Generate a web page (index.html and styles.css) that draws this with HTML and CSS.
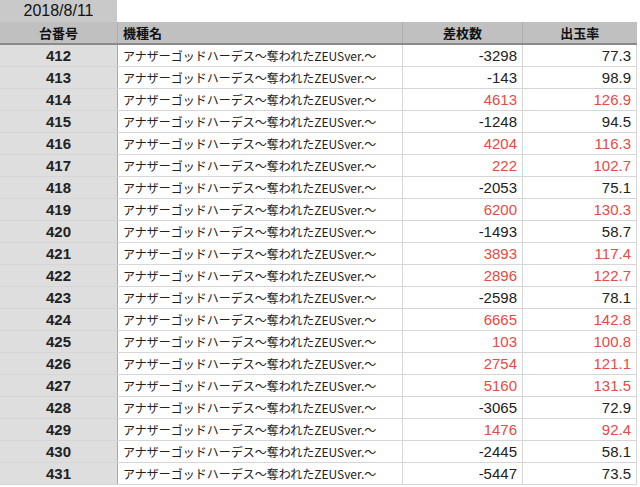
FILE: index.html
```html
<!DOCTYPE html>
<html lang="ja">
<head>
<meta charset="utf-8">
<link rel="stylesheet" href="styles.css">
</head>
<body>
<div class="date">2018/8/11</div>
<table class="data">
<thead>
<tr><th class="c-no">台番号</th><th class="c-name">機種名</th><th class="c-diff">差枚数</th><th class="c-rate">出玉率</th></tr>
</thead>
<tbody>
<tr><td class="no">412</td><td class="name">アナザーゴッドハーデス～奪われたZEUSver.～</td><td class="num">-3298</td><td class="num">77.3</td></tr>
<tr><td class="no">413</td><td class="name">アナザーゴッドハーデス～奪われたZEUSver.～</td><td class="num">-143</td><td class="num">98.9</td></tr>
<tr><td class="no">414</td><td class="name">アナザーゴッドハーデス～奪われたZEUSver.～</td><td class="num pos">4613</td><td class="num pos">126.9</td></tr>
<tr><td class="no">415</td><td class="name">アナザーゴッドハーデス～奪われたZEUSver.～</td><td class="num">-1248</td><td class="num">94.5</td></tr>
<tr><td class="no">416</td><td class="name">アナザーゴッドハーデス～奪われたZEUSver.～</td><td class="num pos">4204</td><td class="num pos">116.3</td></tr>
<tr><td class="no">417</td><td class="name">アナザーゴッドハーデス～奪われたZEUSver.～</td><td class="num pos">222</td><td class="num pos">102.7</td></tr>
<tr><td class="no">418</td><td class="name">アナザーゴッドハーデス～奪われたZEUSver.～</td><td class="num">-2053</td><td class="num">75.1</td></tr>
<tr><td class="no">419</td><td class="name">アナザーゴッドハーデス～奪われたZEUSver.～</td><td class="num pos">6200</td><td class="num pos">130.3</td></tr>
<tr><td class="no">420</td><td class="name">アナザーゴッドハーデス～奪われたZEUSver.～</td><td class="num">-1493</td><td class="num">58.7</td></tr>
<tr><td class="no">421</td><td class="name">アナザーゴッドハーデス～奪われたZEUSver.～</td><td class="num pos">3893</td><td class="num pos">117.4</td></tr>
<tr><td class="no">422</td><td class="name">アナザーゴッドハーデス～奪われたZEUSver.～</td><td class="num pos">2896</td><td class="num pos">122.7</td></tr>
<tr><td class="no">423</td><td class="name">アナザーゴッドハーデス～奪われたZEUSver.～</td><td class="num">-2598</td><td class="num">78.1</td></tr>
<tr><td class="no">424</td><td class="name">アナザーゴッドハーデス～奪われたZEUSver.～</td><td class="num pos">6665</td><td class="num pos">142.8</td></tr>
<tr><td class="no">425</td><td class="name">アナザーゴッドハーデス～奪われたZEUSver.～</td><td class="num pos">103</td><td class="num pos">100.8</td></tr>
<tr><td class="no">426</td><td class="name">アナザーゴッドハーデス～奪われたZEUSver.～</td><td class="num pos">2754</td><td class="num pos">121.1</td></tr>
<tr><td class="no">427</td><td class="name">アナザーゴッドハーデス～奪われたZEUSver.～</td><td class="num pos">5160</td><td class="num pos">131.5</td></tr>
<tr><td class="no">428</td><td class="name">アナザーゴッドハーデス～奪われたZEUSver.～</td><td class="num">-3065</td><td class="num">72.9</td></tr>
<tr><td class="no">429</td><td class="name">アナザーゴッドハーデス～奪われたZEUSver.～</td><td class="num pos">1476</td><td class="num pos">92.4</td></tr>
<tr><td class="no">430</td><td class="name">アナザーゴッドハーデス～奪われたZEUSver.～</td><td class="num">-2445</td><td class="num">58.1</td></tr>
<tr><td class="no">431</td><td class="name">アナザーゴッドハーデス～奪われたZEUSver.～</td><td class="num">-5447</td><td class="num">73.5</td></tr>
</tbody>
</table>
</body>
</html>
```

FILE: styles.css
```css
html, body {
  margin: 0;
  padding: 0;
  background: #ffffff;
}
body {
  font-family: "Liberation Sans", "Noto Sans CJK JP", sans-serif;
  color: #222222;
  font-size: 13px;
}
.date {
  width: 117px;
  height: 22px;
  line-height: 22px;
  background: #c9c9c9;
  text-align: center;
  font-size: 16px;
  color: #111111;
}
.data {
  border-collapse: collapse;
  width: 637px;
  table-layout: fixed;
}
.data th {
  background: #c0c0c0;
  height: 21px;
  padding: 0;
  font-size: 13px;
  font-weight: bold;
  color: #111111;
  border-left: 1px solid #b0b0b0;
  border-bottom: 2px solid #8a8a8a;
  text-align: center;
}
.data th:first-child { border-left: none; }
.data th.c-name { text-align: left; padding-left: 5px; }
.c-no { width: 117px; }
.data th.c-name { width: 279px; }
.c-diff { width: 119px; }
.data td {
  height: 21px;
  padding: 0;
  border: 1px solid #d6d6d6;
  white-space: nowrap;
  overflow: hidden;
}
.data td.no {
  background: #dedede;
  border-left: none;
  border-right: 1px solid #a8a8a8;
  text-align: center;
  font-size: 15px;
  font-weight: bold;
  color: #222222;
}
.data td.name {
  padding-left: 5px;
  font-family: "Noto Sans CJK JP", sans-serif;
  font-size: 12px;
  color: #222222;
}
.data td.num {
  text-align: right;
  padding-right: 5px;
  font-size: 15px;
  color: #222222;
}
.data td.pos { color: #e84a44; }
```
